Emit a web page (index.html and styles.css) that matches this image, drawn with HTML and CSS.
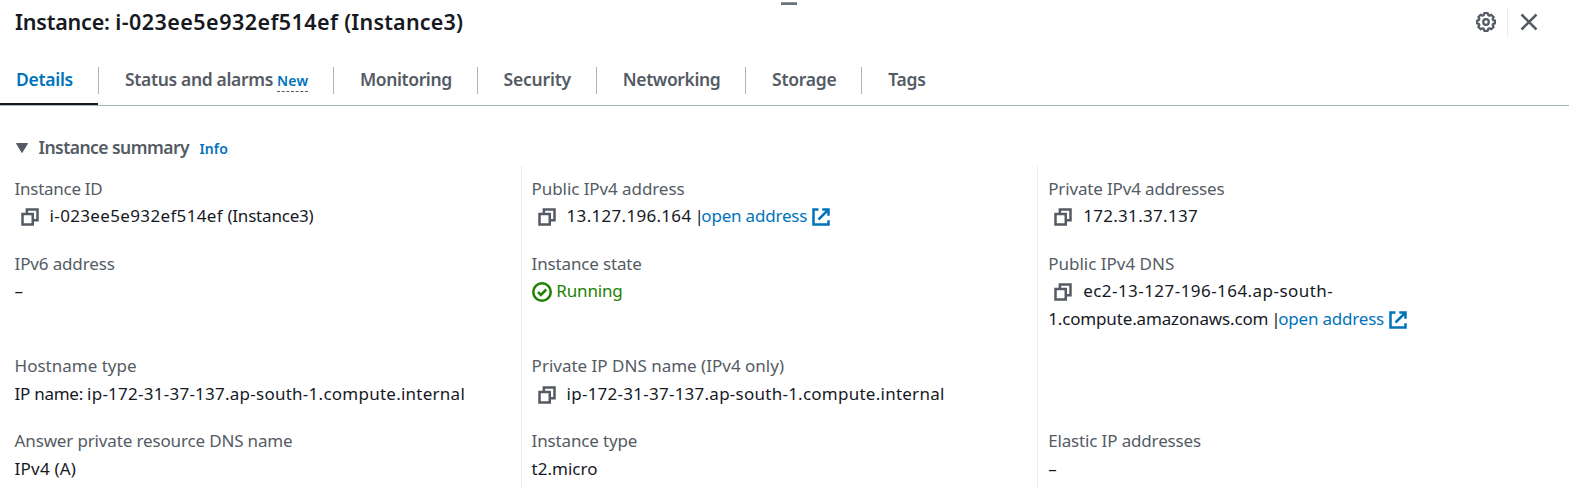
FILE: index.html
```
<!DOCTYPE html>
<html lang="en">
<head>
<meta charset="utf-8">
<title>Instance details</title>
<link rel="stylesheet" href="styles.css">
</head>
<body>
<svg class="defs" width="0" height="0">
  <symbol id="copy" viewBox="0 0 16 16"><path d="M2 5.5h8.2V14H2zM5.5 5V2H14v8.6h-3.5"/></symbol>
  <symbol id="external" viewBox="0 0 16 16"><path d="M6 2H2v12h12v-3.5M9 2h5v5M6 10l7.5-7.5"/></symbol>
  <symbol id="check" viewBox="0 0 16 16"><circle cx="8" cy="8" r="7"/><path d="M4.8 8l2.3 2.3 4.3-4.3"/></symbol>
</svg>
<div class="panel">
  <div class="handle"></div>
  <header class="header">
    <h1 class="title"><span class="track-n20">Instance: </span><span class="track-45">i-023ee5e932ef514ef</span> <span class="track-20">(Instance3)</span></h1>
    <div class="actions">
      <svg class="gear" viewBox="0 0 20 20"><path d="M8.2 1.2h3.6l.5 2 1.1.5 1.8-1 2.4 2.4-1 1.8.5 1.2 2 .5v2.8l-2 .5-.5 1.2 1 1.8-2.4 2.4-1.8-1-1.1.5-.5 2H8.2l-.5-2-1.2-.5-1.8 1-2.3-2.4 1-1.8-.5-1.2-2-.5V8.6l2-.5.5-1.2-1-1.8 2.3-2.4 1.8 1 1.2-.5z"/><circle cx="10" cy="10" r="2.8"/></svg>
      <span class="divider"></span>
      <svg class="close" viewBox="0 0 20 20"><path d="M2.5 2.5l15 15M17.5 2.5l-15 15"/></svg>
    </div>
  </header>
  <nav class="tabs">
    <a class="tab tab-active"><span class="track-n28">Details</span></a>
    <a class="tab tab-status"><span class="track-n34">Status and alarms</span><span class="new">New</span></a>
    <a class="tab"><span class="track-n40">Monitoring</span></a>
    <a class="tab"><span class="track-n20">Security</span></a>
    <a class="tab"><span class="track-n40">Networking</span></a>
    <a class="tab"><span class="track-n28">Storage</span></a>
    <a class="tab"><span class="track-n20">Tags</span></a>
  </nav>
  <div class="summary">
    <svg class="caret" viewBox="0 0 12 10"><path d="M.5.5h11L6 9.5z"/></svg>
    <h2 class="summary-title">Instance summary</h2>
    <a class="info">Info</a>
  </div>
  <div class="grid">
    <div class="cell"><div class="label track-n28">Instance ID</div><div><svg class="copy"><use href="#copy"/></svg><span class="track-35">i-023ee5e932ef514ef</span> <span class="track-n20">(Instance3)</span></div></div>
    <div class="cell"><div class="label track-n08">Public IPv4 address</div><div><svg class="copy"><use href="#copy"/></svg><span class="track-30">13.127.196.164</span><span class="pipe">|</span><a class="link">open address<svg class="external"><use href="#external"/></svg></a></div></div>
    <div class="cell"><div class="label track-n15">Private IPv4 addresses</div><div><svg class="copy"><use href="#copy"/></svg><span class="track-30">172.31.37.137</span></div></div>

    <div class="cell"><div class="label track-n15">IPv6 address</div><div class="dash">–</div></div>
    <div class="cell"><div class="label track-n15">Instance state</div><div class="running"><svg class="check"><use href="#check"/></svg><span class="track-n15">Running</span></div></div>
    <div class="cell"><div class="label">Public IPv4 DNS</div><div><svg class="copy"><use href="#copy"/></svg><span class="track-45">ec2-13-127-196-164.ap-south-</span><br><span class="track-n15">1.compute.amazonaws.com</span><span class="pipe">|</span><a class="link">open address<svg class="external"><use href="#external"/></svg></a></div></div>

    <div class="cell"><div class="label">Hostname type</div><div><span class="track-n28">IP name: </span><span class="track-25">ip-172-31-37-137.ap-south-1.compute.internal</span></div></div>
    <div class="cell"><div class="label">Private IP DNS name (IPv4 only)</div><div><svg class="copy"><use href="#copy"/></svg><span class="track-25">ip-172-31-37-137.ap-south-1.compute.internal</span></div></div>
    <div class="cell"></div>

    <div class="cell"><div class="label track-n15">Answer private resource DNS name</div><div class="track-20">IPv4 (A)</div></div>
    <div class="cell"><div class="label track-n15">Instance type</div><div>t2.micro</div></div>
    <div class="cell"><div class="label track-n15">Elastic IP addresses</div><div class="dash">–</div></div>
  </div>
</div>
</body>
</html>
```
FILE: styles.css
```
* { box-sizing: border-box; }
body {
  margin: 0;
  background: #fff;
  color: #16191f;
  font-family: "Noto Sans", "Open Sans", sans-serif;
  font-size: 17px;
  line-height: 27.5px;
}
h1, h2 { margin: 0; font-weight: 600; }
svg { fill: none; stroke: currentColor; }
.defs { display: none; }
.panel { height: 489px; overflow: hidden; }
.handle {
  width: 16px;
  height: 3px;
  margin: 2px 0 0 781px;
  background: #687078;
  border-top: 1px solid #8d949c;
}
.header {
  height: 51px;
  margin-top: -5px;
  padding: 6px 30px 0 15px;
  display: flex;
  justify-content: space-between;
  align-items: flex-start;
}
.title { font-size: 21.5px; line-height: 32px; }
.actions {
  height: 30px;
  margin-top: 1px;
  display: flex;
  align-items: center;
  color: #545b64;
}
.gear { width: 20px; height: 20px; margin-right: 11px; stroke-width: 2.2; stroke-linejoin: round; }
.divider { width: 1px; height: 30px; background: #eaeded; }
.close { width: 20px; height: 20px; margin-left: 11px; stroke-width: 2.5; }
.tabs {
  height: 55px;
  display: flex;
  align-items: flex-start;
  border-bottom: 1px solid #aab7b8;
  color: #545b64;
  font-size: 17.5px;
  font-weight: 600;
}
.tab {
  position: relative;
  height: 27px;
  margin-top: 16px;
  padding: 0 24.8px 0 26px;
  border-right: 1px solid #aab7b8;
  line-height: 24px;
  white-space: nowrap;
}
.tab:last-child { border-right: 0; }
.tab-active { width: 99px; padding: 0 0 0 16px; color: #0073bb; }
.tab-active::after {
  content: "";
  position: absolute;
  left: 0;
  bottom: -11px;
  width: 98px;
  height: 2px;
  background: #16191f;
}
.tab-status { width: 235px; display: flex; padding-right: 0; }
.new {
  height: 25px;
  margin-left: 4px;
  border-bottom: 1px dashed #545b64;
  color: #0073bb;
  font-size: 14px;
  line-height: 28px;
  letter-spacing: .2px;
}
.summary {
  height: 60px;
  padding: 28px 0 0 16px;
  display: flex;
  align-items: flex-start;
  color: #545b64;
}
.caret { width: 12px; height: 10px; margin: 9px 10.5px 0 0; fill: currentColor; }
.summary-title { font-size: 17.5px; line-height: 27px; letter-spacing: -.54px; }
.info { margin-left: 10.5px; color: #0073bb; font-size: 14px; font-weight: 600; line-height: 29px; letter-spacing: .1px; }
.grid {
  display: grid;
  grid-template-columns: 521px 516px 532px;
  grid-template-rows: 83.7px 102.5px 75px 75px;
}
.cell { padding: 0 10px; border-left: 1px solid #eaeded; white-space: nowrap; }
.cell:nth-child(-n+3) { padding-top: 8.7px; }
.cell:nth-child(3n+1) { padding-left: 14.6px; border-left: 0; }
.cell:nth-child(3n+2) { padding-left: 9.6px; }
.cell:nth-child(3n) { padding-left: 10.2px; }
.label { color: #545b64; }
.link { color: #0073bb; letter-spacing: -.2px; }
.pipe { margin: 0 -2.5px 0 3px; }
.copy { width: 20px; height: 20px; margin: 0 9.7px 0 5.3px; vertical-align: -5px; color: #545b64; stroke-width: 2; }
.external { width: 20px; height: 20px; margin-left: 4px; vertical-align: -5px; stroke-width: 2; }
.running { color: #1d8102; }
.check { width: 20px; height: 20px; margin-right: 4.7px; vertical-align: -5px; stroke-width: 2; }
.dash { letter-spacing: .5px; }
.track-n40 { letter-spacing: -.4px; }
.track-n34 { letter-spacing: -.34px; }
.track-n28 { letter-spacing: -.28px; }
.track-n20 { letter-spacing: -.2px; }
.track-n15 { letter-spacing: -.15px; }
.track-n08 { letter-spacing: -.08px; }
.track-20 { letter-spacing: .2px; }
.track-25 { letter-spacing: .25px; }
.track-30 { letter-spacing: .3px; }
.track-35 { letter-spacing: .35px; }
.track-45 { letter-spacing: .45px; }
```
